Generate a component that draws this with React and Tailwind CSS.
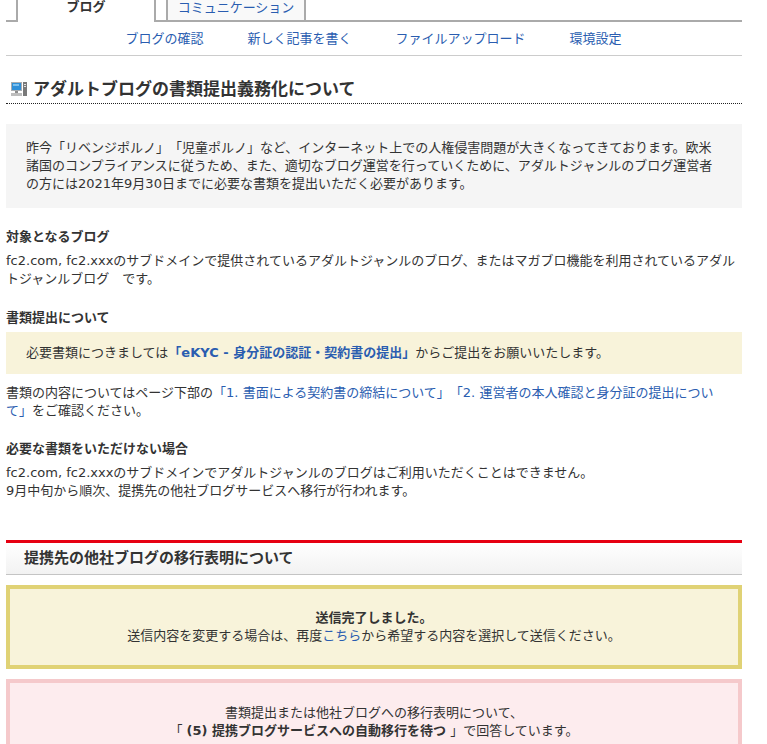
const navItems = ['ブログの確認', '新しく記事を書く', 'ファイルアップロード', '環境設定']

const PcIcon = () => (
  <svg width="16" height="14" viewBox="0 0 16 14" className="shrink-0">
    <rect x="0" y="0" width="11" height="9" fill="#a9adb0" />
    <rect x="1" y="1" width="9" height="7" fill="#2f8fd8" />
    <rect x="2" y="2" width="6" height="2" fill="#7cc0ee" />
    <rect x="4" y="9" width="3" height="2" fill="#8d8d8d" />
    <rect x="0" y="11" width="11" height="3" fill="#bdbdbd" />
    <rect x="12" y="0" width="4" height="14" fill="#7a7a7a" />
    <rect x="13" y="2" width="2" height="1" fill="#e2e2e2" />
    <rect x="13" y="4" width="2" height="1" fill="#e2e2e2" />
  </svg>
)

const A = ({ children }) => <span className="text-[#2a5db0]">{children}</span>

export default function App() {
  return (
    <div className="w-[767px] h-[744px] overflow-hidden bg-white text-[13px] leading-[18px] text-[#333] font-['DejaVu_Sans','Noto_Sans_CJK_JP',sans-serif] [text-spacing-trim:space-all]">
      <div className="w-[736px] ml-[6px]">
        {/* tabs */}
        <div className="flex h-[22px] border-b-2 border-[#aaa] pl-[10px]">
          <div className="w-[140px] h-[22px] bg-white border-x-2 border-[#aaa] text-center font-bold leading-[14px]">ブログ</div>
          <div className="w-[140px] h-[20px] ml-[10px] bg-[#f9f9f9] border-x-2 border-[#aaa] text-center leading-[16px] text-[#2a5db0]">コミュニケーション</div>
        </div>
        {/* sub nav */}
        <div className="flex justify-center gap-[44px] h-[34px] border-b border-[#ccc] items-center text-[#2a5db0] pr-[1px]">
          {navItems.map((item) => (
            <span key={item}>{item}</span>
          ))}
        </div>
        {/* page title */}
        <div className="flex items-center gap-[6px] h-[48px] pl-[5px] pt-[19px] pb-[1px] border-b border-dotted border-[#222]">
          <PcIcon />
          <h1 className="text-[17px] font-bold leading-[24px]">アダルトブログの書類提出義務化について</h1>
        </div>

        <div className="mt-[20px] h-[84px] bg-[#f5f5f5] px-[20px] pt-[15px]">
          昨今「リベンジポルノ」「児童ポルノ」など、インターネット上での人権侵害問題が大きくなってきております。欧米諸国のコンプライアンスに従うため、また、適切なブログ運営を行っていくために、アダルトジャンルのブログ運営者の方には2021年9月30日までに必要な書類を提出いただく必要があります。
        </div>

        <h2 className="mt-[20px] font-bold">対象となるブログ</h2>
        <p className="mt-[6px]">fc2.com, fc2.xxxのサブドメインで提供されているアダルトジャンルのブログ、またはマガブロ機能を利用されているアダルトジャンルブログ　です。</p>

        <h2 className="mt-[21px] font-bold">書類提出について</h2>
        <div className="mt-[5px] h-[42px] bg-[#f8f3da] px-[20px] flex items-center">
          <span>必要書類につきましては<span className="font-bold text-[#2a5db0]">「eKYC - 身分証の認証・契約書の提出」</span>からご提出をお願いいたします。</span>
        </div>
        <p className="mt-[10px] pr-[8px]">書類の内容についてはページ下部の<A>「1. 書面による契約書の締結について」「2. 運営者の本人確認と身分証の提出について」</A>をご確認ください。</p>

        <h2 className="mt-[20px] font-bold">必要な書類をいただけない場合</h2>
        <p className="mt-[6px]">fc2.com, fc2.xxxのサブドメインでアダルトジャンルのブログはご利用いただくことはできません。<br />9月中旬から順次、提携先の他社ブログサービスへ移行が行われます。</p>

        {/* migration section */}
        <h2 className="mt-[40px] h-[35px] border-t-[3px] border-b border-t-[#e60012] border-b-[#c4c4c4] bg-gradient-to-b from-white to-[#f2f2f2] pl-[18px] text-[15px] font-bold leading-[30px]">提携先の他社ブログの移行表明について</h2>

        <div className="mt-[10px] h-[84px] border-[4px] border-[#e0d275] bg-[#f8f3da] pt-[20px] text-center">
          <p className="font-bold">送信完了しました。</p>
          <p>送信内容を変更する場合は、再度<A>こちら</A>から希望する内容を選択して送信ください。</p>
        </div>

        <div className="mt-[10px] h-[100px] border-[4px] border-[#f5c9cb] bg-[#fdecee] pt-[21px] text-center">
          <p>書類提出または他社ブログへの移行表明について、</p>
          <p>「 <b>(5) 提携ブログサービスへの自動移行を待つ</b> 」で回答しています。</p>
        </div>
      </div>
    </div>
  )
}
